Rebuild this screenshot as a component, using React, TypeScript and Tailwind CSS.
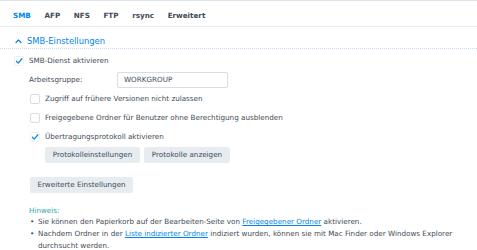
import React from "react";

const Check = () => (
  <svg width="10" height="10" viewBox="0 0 10 10" className="block">
    <path d="M1.8 5.3 L4 7.6 L8.6 2.2" fill="none" stroke="#0086e5" strokeWidth="1.5" strokeLinecap="round" strokeLinejoin="round" />
  </svg>
);

const Box = ({ checked }: { checked?: boolean }) => (
  <span
    className={
      checked
        ? "flex h-[10px] w-[10px] items-center justify-center rounded-[2px] border border-[#eef1f4] bg-white"
        : "flex h-[10px] w-[10px] items-center justify-center rounded-[2px] border border-[#d6dce4] bg-white"
    }
  >
    {checked ? <Check /> : null}
  </span>
);

export default function App() {
  const tabs = ["SMB", "AFP", "NFS", "FTP", "rsync", "Erweitert"];
  return (
    <div className="h-[250px] w-[477px] overflow-hidden bg-white font-['DejaVu_Sans',sans-serif] text-[7.2px] leading-[12px] text-[#414b55]">
      <div className="h-[1px] bg-[#dde4ef]" />
      <div className="flex h-[26px] gap-[13.6px] border-b border-[#e9ebee] pl-[13px]">
        {tabs.map((t, i) => (
          <div
            key={t}
            className={
              i === 0
                ? "flex h-full items-center pt-[4px] font-bold text-[#0086e5]"
                : "flex h-full items-center pt-[4px] font-bold text-[#414b55]"
            }
          >
            {t}
          </div>
        ))}
      </div>
      <div className="flex h-[22px] items-start border-b border-dotted border-[#c9dcf2] pl-[15px] pt-[9px] text-[8.4px] leading-[10px] text-[#0086e5]">
        <svg width="7" height="10" viewBox="0 0 7 10" className="mr-[5px] block">
          <path d="M1 6.5 L3.5 4 L6 6.5" fill="none" stroke="#0086e5" strokeWidth="1.2" strokeLinecap="round" strokeLinejoin="round" />
        </svg>
        <span>SMB-Einstellungen</span>
      </div>

      <div className="mt-[6px] flex h-[12px] items-center pl-[14px]">
        <Box checked />
        <span className="ml-[5px]">SMB-Dienst aktivieren</span>
      </div>

      <div className="mt-[5px] flex h-[16px] items-center pl-[29px]">
        <span className="w-[88px]">Arbeitsgruppe:</span>
        <div className="flex h-[16px] w-[111px] items-center rounded-[2px] border border-[#d7dde4] pl-[6px]">
          WORKGROUP
        </div>
      </div>

      <div className="mt-[5px] flex h-[12px] items-center pl-[30px]">
        <Box />
        <span className="ml-[5px]">Zugriff auf frühere Versionen nicht zulassen</span>
      </div>

      <div className="mt-[7px] flex h-[12px] items-center pl-[30px]">
        <Box />
        <span className="ml-[5px]">Freigegebene Ordner für Benutzer ohne Berechtigung ausblenden</span>
      </div>

      <div className="mt-[7px] flex h-[12px] items-center pl-[30px]">
        <Box checked />
        <span className="ml-[5px]">Übertragungsprotokoll aktivieren</span>
      </div>

      <div className="mt-[4px] flex gap-[4px] pl-[45px]">
        <div className="flex h-[16px] w-[95px] items-center justify-center rounded-[2px] bg-[#e7ecf1]">
          Protokolleinstellungen
        </div>
        <div className="flex h-[16px] w-[86px] items-center justify-center rounded-[2px] bg-[#e7ecf1]">
          Protokolle anzeigen
        </div>
      </div>

      <div className="mt-[14px] pl-[30px]">
        <div className="flex h-[16px] w-[103px] items-center justify-center rounded-[2px] bg-[#e7ecf1]">
          Erweiterte Einstellungen
        </div>
      </div>

      <div className="mt-[12px] pl-[29px] leading-[11px] text-[#1ea89f]">Hinweis:</div>
      <div className="pl-[29px]">
        <div className="flex whitespace-nowrap">
          <span className="w-[9px] shrink-0 pl-[1px]">•</span>
          <span>Sie können den Papierkorb auf der Bearbeiten-Seite von&nbsp;</span>
          <span className="text-[#0086e5] underline">Freigegebener Ordner</span>
          <span>&nbsp;aktivieren.</span>
        </div>
        <div className="flex whitespace-nowrap">
          <span className="w-[9px] shrink-0 pl-[1px]">•</span>
          <span>Nachdem Ordner in der&nbsp;</span>
          <span className="text-[#0086e5] underline">Liste indizierter Ordner</span>
          <span>&nbsp;indiziert wurden, können sie mit Mac Finder oder Windows Explorer</span>
        </div>
        <div className="pl-[9px]">durchsucht werden.</div>
      </div>
    </div>
  );
}
